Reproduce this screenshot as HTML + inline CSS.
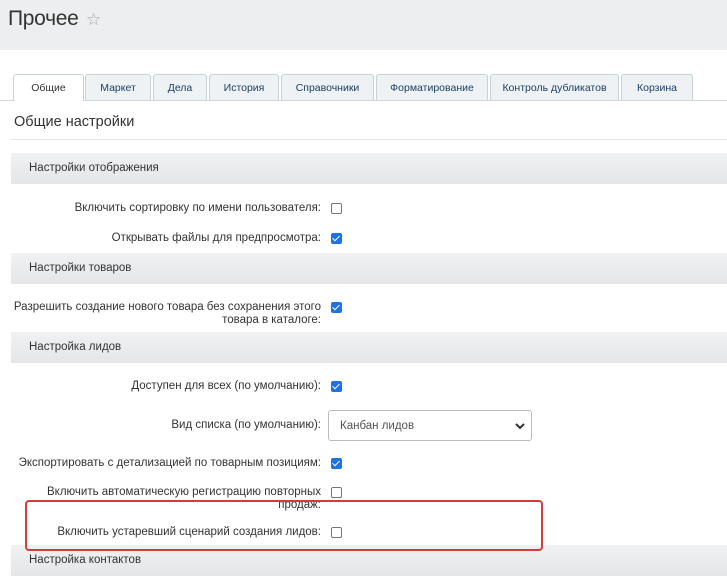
<!DOCTYPE html>
<html><head><meta charset="utf-8"><style>
body{margin:0;width:727px;height:567px;overflow:hidden;background:#fff;font-family:"Liberation Sans",sans-serif;position:relative}
.hdr{position:absolute;left:0;top:0;width:727px;height:50px;background:#eceeef}
.title{position:absolute;left:8px;top:7px;font-size:21px;color:#333;letter-spacing:-0.3px}
.star{position:absolute;left:86px;top:10px;font-size:17px;color:#aaa}
.panel{position:absolute;left:3px;top:50px;width:724px;height:517px;background:#fff;border-radius:4px 0 0 0}
.tabs{position:absolute;left:0;top:100px;width:727px;border-top:1px solid #cfd6da}
.tab{position:absolute;top:74px;height:26px;background:#eef2f4;border:1px solid #c8d1d6;border-bottom:none;border-radius:3px 3px 0 0;font-size:10.5px;color:#1c3f66;text-align:center;line-height:26px;box-sizing:border-box}
.tab.a{background:#fff;color:#333;height:27px}
.h2{position:absolute;left:14px;top:114px;font-size:14.5px;color:#333}
.hl{position:absolute;left:11px;top:139px;width:716px;border-top:1px solid #e6e8e9}
.sec{position:absolute;left:11px;width:716px;height:31px;background:linear-gradient(#f0f1f2,#e4e6e7);font-size:11.5px;color:#333;line-height:31px;box-sizing:border-box;padding-left:18px}
.lbl{position:absolute;right:406px;font-size:11.5px;color:#333;text-align:right;line-height:13px}
.cb{position:absolute;left:331px;width:9px;height:9px;border:1px solid #777;border-radius:2px;background:#fff}
.cb.c{background:#1a73e8;border-color:#1a73e8}
.cb.c:after{content:"";position:absolute;left:2px;top:0;width:3px;height:6px;border:solid #fff;border-width:0 1.5px 1.5px 0;transform:rotate(45deg)}
.sel{position:absolute;left:328px;top:410px;width:204px;height:31px;border:1px solid #bbb;border-radius:3px;box-sizing:border-box;font-size:11.5px;color:#555;line-height:31px;padding-left:11px}
.red{position:absolute;left:25px;top:500px;width:518px;height:51px;border:2px solid #d23c3c;border-radius:4px;box-sizing:border-box}
</style></head><body>
<div class="hdr"></div>
<div class="title">Прочее</div><div class="star">☆</div>
<div class="panel"></div>
<div class="tabs"></div>
<div class="tab a" style="left:13px;width:71px">Общие</div>
<div class="tab" style="left:85px;width:66px">Маркет</div>
<div class="tab" style="left:153px;width:54px">Дела</div>
<div class="tab" style="left:209px;width:70px">История</div>
<div class="tab" style="left:281px;width:93px">Справочники</div>
<div class="tab" style="left:376px;width:112px">Форматирование</div>
<div class="tab" style="left:490px;width:129px">Контроль дубликатов</div>
<div class="tab" style="left:621px;width:72px">Корзина</div>
<div class="h2">Общие настройки</div><div class="hl"></div>
<div class="sec" style="top:153px">Настройки отображения</div>
<div class="lbl" style="top:202px">Включить сортировку по имени пользователя:</div><div class="cb" style="top:203px"></div>
<div class="lbl" style="top:232px">Открывать файлы для предпросмотра:</div><div class="cb c" style="top:233px"></div>
<div class="sec" style="top:253px">Настройки товаров</div>
<div class="lbl" style="top:301px">Разрешить создание нового товара без сохранения этого<br>товара в каталоге:</div><div class="cb c" style="top:302px"></div>
<div class="sec" style="top:332px">Настройка лидов</div>
<div class="lbl" style="top:380px">Доступен для всех (по умолчанию):</div><div class="cb c" style="top:381px"></div>
<div class="lbl" style="top:419px">Вид списка (по умолчанию):</div>
<div class="sel">Канбан лидов<svg style="position:absolute;right:6px;top:12px" width="10" height="7"><path d="M1 1l4 4 4-4" stroke="#333" stroke-width="2" fill="none"/></svg></div>
<div class="lbl" style="top:457px">Экспортировать с детализацией по товарным позициям:</div><div class="cb c" style="top:458px"></div>
<div class="lbl" style="top:486px">Включить автоматическую регистрацию повторных<br>продаж:</div><div class="cb" style="top:487px"></div>
<div class="lbl" style="top:526px">Включить устаревший сценарий создания лидов:</div><div class="cb" style="top:527px"></div>
<div class="sec" style="top:545px;height:31px">Настройка контактов</div>
<div class="red"></div>
</body></html>
